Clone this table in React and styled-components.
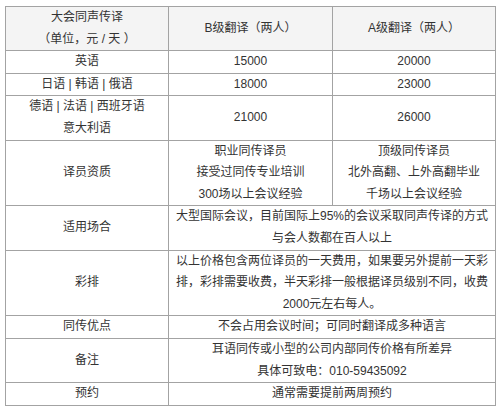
import React from 'react';
import styled, { createGlobalStyle } from 'styled-components';

const GlobalStyle = createGlobalStyle`
  html, body {
    margin: 0;
    padding: 0;
    background: #fff;
  }
`;

const Page = styled.div`
  padding: 6px 0 0 5px;
  font-family: "Liberation Sans", "Noto Sans CJK SC", sans-serif;
  font-size: 12px;
  color: #333;
`;

const Table = styled.table`
  width: 490px;
  border-collapse: collapse;
  table-layout: fixed;
`;

const Cell = styled.td`
  border: 1px solid #a3a3a3;
  padding: 0;
  line-height: 21.6px;
  text-align: center;
  white-space: nowrap;
  background: ${p => (p.$head ? '#f4f4f4' : '#fff')};
`;

const rows = [
  { cells: [['英语'], ['15000'], ['20000']] },
  { cells: [['日语 | 韩语 | 俄语'], ['18000'], ['23000']] },
  { cells: [['德语 | 法语 | 西班牙语', '意大利语'], ['21000'], ['26000']] },
  {
    cells: [
      ['译员资质'],
      ['职业同传译员', '接受过同传专业培训', '300场以上会议经验'],
      ['顶级同传译员', '北外高翻、上外高翻毕业', '千场以上会议经验'],
    ],
  },
  {
    cells: [['适用场合'], ['大型国际会议，目前国际上95%的会议采取同声传译的方式', '与会人数都在百人以上']],
  },
  {
    cells: [
      ['彩排'],
      [
        '以上价格包含两位译员的一天费用，如果要另外提前一天彩',
        '排，彩排需要收费，半天彩排一般根据译员级别不同，收费',
        '2000元左右每人。',
      ],
    ],
  },
  { cells: [['同传优点'], ['不会占用会议时间；可同时翻译成多种语言']] },
  { cells: [['备注'], ['耳语同传或小型的公司内部同传价格有所差异', '具体可致电：010-59435092']] },
  { cells: [['预约'], ['通常需要提前两周预约']] },
];

function Lines({ lines }) {
  return lines.map((l, i) => (
    <React.Fragment key={i}>
      {i > 0 && <br />}
      {l}
    </React.Fragment>
  ));
}

export default function App() {
  return (
    <Page>
      <GlobalStyle />
      <Table>
        <colgroup>
          <col style={{ width: 163 }} />
          <col style={{ width: 164 }} />
          <col style={{ width: 163 }} />
        </colgroup>
        <tbody>
          <tr>
            <Cell $head>
              <Lines lines={['大会同声传译', '（单位，元 / 天 ）']} />
            </Cell>
            <Cell $head>B级翻译（两人）</Cell>
            <Cell $head>A级翻译（两人）</Cell>
          </tr>
          {rows.map((r, i) => (
            <tr key={i}>
              {r.cells.map((c, j) => (
                <Cell key={j} colSpan={r.cells.length === 2 && j === 1 ? 2 : 1}>
                  <Lines lines={c} />
                </Cell>
              ))}
            </tr>
          ))}
        </tbody>
      </Table>
    </Page>
  );
}
